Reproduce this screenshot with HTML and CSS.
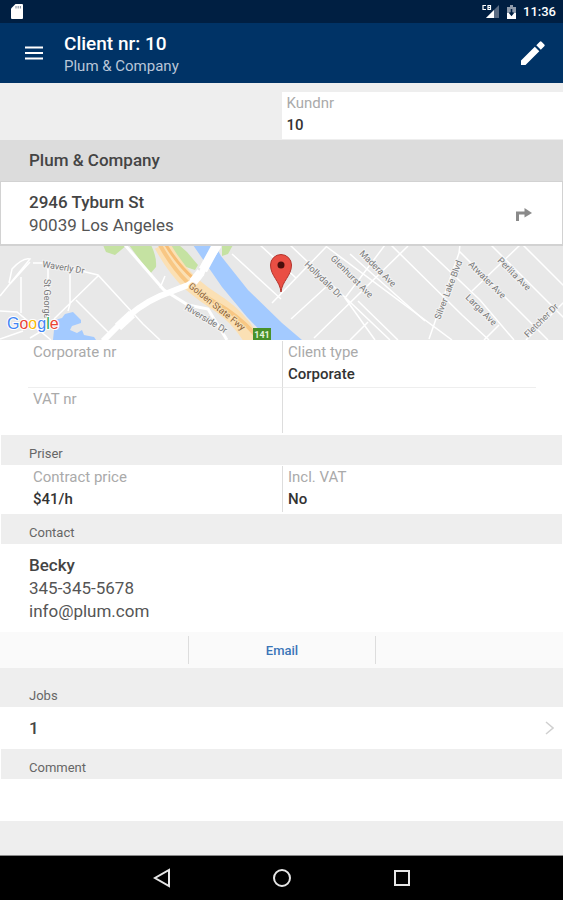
FILE: index.html
```html
<!DOCTYPE html>
<html lang="en">
<head>
    <meta charset="UTF-8">
    <meta name="viewport" content="width=device-width, initial-scale=1.0">
    <title>Client nr: 10</title>
    <link rel="stylesheet" href="styles.css">
</head>
<body>
    <div class="status-bar">
        <svg class="sd-icon" width="12" height="15" viewBox="0 0 12 15">
            <path d="M4.500 0H11a1 1 0 0 1 1 1v13a1 1 0 0 1-1 1H1a1 1 0 0 1-1-1V4.500z" fill="#fff"/>
            <path d="M5 2v2.500M7.200 2v2.500M9.400 2v2.500" stroke="#8d97a5" stroke-width="1.200"/>
        </svg>
        <div class="status-right">
            <svg width="18" height="15" viewBox="0 0 18 15">
                <path d="M17 1v13H4z" fill="#5b6c83"/>
                <path d="M12 6v8H4z" fill="#fff"/>
                <path d="M4 1.500H1v4h3M6 1v5M6 1.500h2.500v4H6M6 3.500h2.500" fill="none" stroke="#fff" stroke-width="1.200"/>
            </svg>
            <svg width="9" height="14" viewBox="0 0 9 14">
                <path d="M3 0h3v2h3v12H0V2h3z" fill="#8f9bab"/>
                <path d="M0 8h9v6H0z" fill="#fff"/>
                <path d="M4.500 4v6M2.500 7.500l2 2.500 2-2.500" fill="none" stroke="#001f42" stroke-width="1.600"/>
            </svg>
            <span class="clock">11:36</span>
        </div>
    </div>

    <header class="app-bar">
        <button class="icon-button" aria-label="Menu">
            <svg width="18" height="14" viewBox="0 0 18 14">
                <path d="M0 1.500h18M0 7h18M0 12.500h18" stroke="#fff" stroke-width="2"/>
            </svg>
        </button>
        <div class="app-title">
            <h1>Client nr: 10</h1>
            <p>Plum &amp; Company</p>
        </div>
        <button class="icon-button" aria-label="Edit">
            <svg width="24" height="24" viewBox="0 0 24 24">
                <path d="M0 19.500V24h4.500L18.300 10.200l-4.500-4.500zM15.300 4.200l4.500 4.500 3.500-3.500a1.300 1.300 0 0 0 0-1.800L20.600.7a1.300 1.300 0 0 0-1.800 0z" fill="#fff"/>
            </svg>
        </button>
    </header>

    <main>
        <div class="client-number">
            <div class="field">
                <div class="label">Kundnr</div>
                <div class="value">10</div>
            </div>
        </div>

        <h2 class="client-name">Plum &amp; Company</h2>

        <section class="address">
            <div class="lines">
                <strong>2946 Tyburn St</strong>
                <span>90039 Los Angeles</span>
            </div>
            <button class="directions" aria-label="Directions">
                <svg width="16" height="13" viewBox="0 0 16 13">
                    <path d="M1.500 13V5H10" fill="none" stroke="#8a8a8a" stroke-width="3"/>
                    <path d="M8.500 0L16 5l-7.500 4.500z" fill="#8a8a8a"/>
                </svg>
            </button>
        </section>

        <svg class="map" viewBox="0 0 563 94" preserveAspectRatio="xMidYMid slice">
            <rect width="563" height="94" fill="#e8e8e8"/>
            <!-- parks -->
            <g fill="#c5e2a2">
                <path d="M103-1h24L115 9l-9-3z"/>
                <path d="M129-1h22q6 12 5 22l-6 7z"/>
                <path d="M169-1h10l8 7 11 13-3 5-12-4q-8-8-14-21z"/>
                <path d="M222-1h11l-5 9-6 2z"/>
            </g>
            <!-- water -->
            <g fill="#a3caff">
                <path d="M53 94l2-20 7-2 3-4 8-2 8 8v3l-9 3-2 4 7 3 5-3 2 5 10 2 2 3z"/>
                <path d="M193-1h22l6 11 27 34 34 33 20 17h-33l-22-23-25-30z"/>
            </g>
            <!-- small streets -->
            <g class="street">
                <path d="M0 50L30 13q-7-2-18 10L9 37M0 65l17 1 34 28M30 16L10 38M21 31v36M33 17h15l50 12 45 49 17 16M48 21v54M70 26v32l-2 7M98 30L54 73M76 54l34 34M30 92l20-12M0 93l23-8M160 42l5-12"/>
                <path d="M232 8l49 45M260-1l36 33M272 57l55-57M291 73l35-32M290-1l100 95M327 1l125 93M314 92l94-92M385-1L345 52l30 42M350 94l18-18"/>
                <path d="M391-1l71 70 27 25M422-1l58 55 34 40M460-1l-1 8-30 86M459 5l50 50 39 39M491-1l75 75M520-1l-48 46M523-1l43 43M484 94l15-15M526 94l40-40M358 55l40 39M425 75L350 8"/>
            </g>
            <!-- highway -->
            <path d="M162-1q12 22 28 38 14 12 30 22 20 14 32 35" fill="none" stroke="#fbe0b4" stroke-width="16"/>
            <path d="M160-1q12 22 28 38 14 12 28 20 25 14 44 37" fill="none" stroke="#f8c784" stroke-width="4"/>
            <path d="M166-1q12 20 28 34" fill="none" stroke="#f7bd75" stroke-width="3"/>
            <!-- main roads -->
            <path d="M125-1l39 45 24 15 20 4 19 31" fill="none" stroke="#fff" stroke-width="3"/>
            <path d="M103 95l14-14q20-21 43-31l28-11q12-6 16-17L219-1" fill="none" stroke="#fff" stroke-width="6"/>
            <path d="M118 81l14-13M193 36l8-10M203 24L216 0" fill="none" stroke="#fff" stroke-width="9"/>

            <g class="street-name">
                <text transform="translate(42 21) rotate(9)">Waverly Dr</text>
                <text transform="translate(44 33) rotate(90)">St George</text>
                <text transform="translate(188 41) rotate(39)" class="highway-name">Golden State Fwy</text>
                <text transform="translate(184 63) rotate(31)">Riverside Dr</text>
                <text transform="translate(304 19) rotate(44)">Hollydale Dr</text>
                <text transform="translate(330 13) rotate(45)">Glenhurst Ave</text>
                <text transform="translate(359 8) rotate(45)">Madera Ave</text>
                <text transform="translate(440 74) rotate(-69)">Silver Lake Blvd</text>
                <text transform="translate(468 19) rotate(45)">Atwater Ave</text>
                <text transform="translate(465 52) rotate(45)">Larga Ave</text>
                <text transform="translate(497 15) rotate(45)">Perlita Ave</text>
                <text transform="translate(528 92) rotate(-45)">Fletcher Dr</text>
            </g>

            <rect x="253" y="82" width="18" height="12" fill="#47912a"/>
            <text class="shield" x="262" y="92">141</text>

            <path d="M281 46c-1-11-10.500-16-10.500-27a10.500 10.500 0 0 1 21 0c0 11-9.500 16-10.500 27z" fill="#ea4f44" stroke="#b3342c"/>
            <circle cx="281" cy="19" r="3.500" fill="#4b0f0c"/>

            <text class="google" x="7" y="83"><tspan fill="#4285f4">G</tspan><tspan fill="#ea4335">o</tspan><tspan fill="#fbbc05">o</tspan><tspan fill="#4285f4">g</tspan><tspan fill="#34a853">l</tspan><tspan fill="#ea4335">e</tspan></text>
        </svg>

        <section class="fields">
            <div class="field">
                <div class="label">Corporate nr</div>
            </div>
            <div class="field">
                <div class="label">Client type</div>
                <div class="value">Corporate</div>
            </div>
            <div class="field">
                <div class="label">VAT nr</div>
            </div>
            <div class="field"></div>
        </section>

        <h3 class="section-title">Priser</h3>
        <section class="fields">
            <div class="field">
                <div class="label">Contract price</div>
                <div class="value">$41/h</div>
            </div>
            <div class="field">
                <div class="label">Incl. VAT</div>
                <div class="value">No</div>
            </div>
        </section>

        <h3 class="section-title">Contact</h3>
        <section class="contact lines">
            <strong>Becky</strong>
            <span>345-345-5678</span>
            <span>info@plum.com</span>
        </section>
        <div class="actions">
            <div class="action"></div>
            <div class="action"><button>Email</button></div>
            <div class="action"></div>
        </div>

        <h3 class="section-title jobs-title">Jobs</h3>
        <a class="jobs" href="#">
            <span>1</span>
            <svg width="9" height="14" viewBox="0 0 9 14">
                <path d="M1 1l7 6-7 6" fill="none" stroke="#d0d0d0" stroke-width="1.500"/>
            </svg>
        </a>

        <label class="section-title" for="comment">Comment</label>
        <textarea class="comment" id="comment"></textarea>
    </main>

    <nav class="nav-bar">
        <button aria-label="Back">
            <svg width="18" height="20" viewBox="0 0 18 20">
                <path d="M16 2v16L2 10z" fill="none" stroke="#e6e6e6" stroke-width="2"/>
            </svg>
        </button>
        <button aria-label="Home">
            <svg width="20" height="20" viewBox="0 0 20 20">
                <circle cx="10" cy="10" r="8" fill="none" stroke="#e6e6e6" stroke-width="2"/>
            </svg>
        </button>
        <button aria-label="Recent apps">
            <svg width="18" height="18" viewBox="0 0 18 18">
                <rect x="2" y="2" width="14" height="14" fill="none" stroke="#e6e6e6" stroke-width="2"/>
            </svg>
        </button>
    </nav>
</body>
</html>
```
FILE: styles.css
```css
* {
    box-sizing: border-box;
}
body {
    font-family: Roboto, "Liberation Sans", sans-serif;
    display: flex;
    flex-direction: column;
    min-height: 100vh;
    margin: 0;
    background-color: #eee;
    color: #444;
}
h1, h2, h3, p {
    margin: 0;
}
button {
    padding: 0;
    border: 0;
    background: none;
    font-family: inherit;
    cursor: pointer;
}
svg {
    display: block;
}

/* Top bars */
.status-bar {
    display: flex;
    justify-content: space-between;
    align-items: center;
    height: 23px;
    padding: 0 7px 0 11px;
    background-color: #001f42;
}
.status-right {
    display: flex;
    align-items: center;
    gap: 7px;
}
.clock {
    color: #fff;
    font-size: 13px;
    font-weight: 500;
}
.app-bar {
    display: flex;
    align-items: center;
    height: 60px;
    padding: 0 18px 0 25px;
    background-color: #003366;
    color: #fff;
}
.app-title {
    flex: 1;
    padding: 4px 0 0 21px;
}
.app-title h1 {
    font-size: 19px;
    font-weight: 500;
    line-height: 22px;
}
.app-title p {
    color: #b9c6d8;
    font-size: 15px;
    line-height: 22px;
}

/* Client data */
main {
    flex: 1;
    display: flex;
    flex-direction: column;
}
.client-number {
    display: grid;
    grid-template-columns: 1fr 1fr;
    padding: 9px 0 1px;
}
.client-number .field {
    grid-column: 2;
    min-height: 47px;
    background-color: #fff;
}
.field {
    min-height: 46px;
    padding: 0 5px;
}
.label {
    color: #aaa;
    font-size: 15px;
    line-height: 22px;
}
.value {
    color: #333;
    font-size: 15px;
    font-weight: 500;
    line-height: 22px;
}
.client-name {
    padding: 0 29px;
    background-color: #dcdcdc;
    font-size: 17px;
    font-weight: 500;
    line-height: 41px;
}
.address {
    display: flex;
    justify-content: space-between;
    align-items: center;
    padding: 9px 30px 7px 28px;
    border: 1px solid #d2d2d2;
    border-bottom-width: 2px;
    background-color: #fff;
}
.lines {
    display: flex;
    flex-direction: column;
    font-size: 17px;
    line-height: 23px;
}
.lines strong {
    font-weight: 500;
}
.lines span {
    color: #555;
}

/* Map */
.map {
    width: 100%;
    height: 94px;
}
.street {
    fill: none;
    stroke: #fff;
    stroke-width: 1.5;
}
.street-name {
    fill: #777;
    font-size: 9px;
    paint-order: stroke;
    stroke: #f2f2f2;
    stroke-width: 2;
}
.highway-name {
    fill: #8a6238;
    stroke: #fbe0b4;
}
.shield {
    fill: #e4f2dc;
    font-size: 9px;
    font-weight: 700;
    text-anchor: middle;
}
.google {
    font-family: "Liberation Sans", sans-serif;
    font-size: 16px;
    paint-order: stroke;
    stroke: #fff;
    stroke-width: 2;
}

.fields {
    display: grid;
    grid-template-columns: 1fr 1fr;
    padding: 1px 27px 2px 28px;
    background-color: #fff;
}
.fields .field:nth-child(even) {
    border-left: 1px solid #ddd;
}
.fields .field:nth-child(n + 3) {
    border-top: 1px solid #eee;
}
.section-title {
    display: block;
    height: 30px;
    padding: 8px 28px 0;
    border: solid #fff;
    border-width: 0 1px;
    background-color: #eee;
    color: #666;
    font-size: 13px;
    font-weight: 400;
    line-height: 22px;
}
.contact {
    padding: 10px 29px 9px;
    background-color: #fff;
}
.actions {
    display: grid;
    grid-template-columns: 1fr 1fr 1fr;
    padding: 4px 0;
    background-color: #fafafa;
}
.action {
    display: flex;
    justify-content: center;
    height: 28px;
}
.action + .action {
    border-left: 1px solid #ddd;
}
.action button {
    color: #3a75b8;
    font-size: 13px;
    font-weight: 500;
}
.jobs-title {
    height: 39px;
    padding-top: 17px;
    border-color: #eee;
}
.jobs {
    display: flex;
    justify-content: space-between;
    align-items: center;
    height: 42px;
    padding: 0 9px 0 29px;
    background-color: #fff;
    color: #444;
    font-size: 17px;
    font-weight: 500;
    text-decoration: none;
}
.comment {
    height: 42px;
    padding: 8px 28px;
    border: 0;
    background-color: #fff;
    color: #444;
    font-family: inherit;
    font-size: 17px;
    resize: none;
}

/* Android navigation */
.nav-bar {
    display: flex;
    justify-content: center;
    height: 45px;
    border-top: 1px solid #888;
    background-color: #000;
}
.nav-bar button {
    display: flex;
    justify-content: center;
    align-items: center;
    width: 120px;
}
```
